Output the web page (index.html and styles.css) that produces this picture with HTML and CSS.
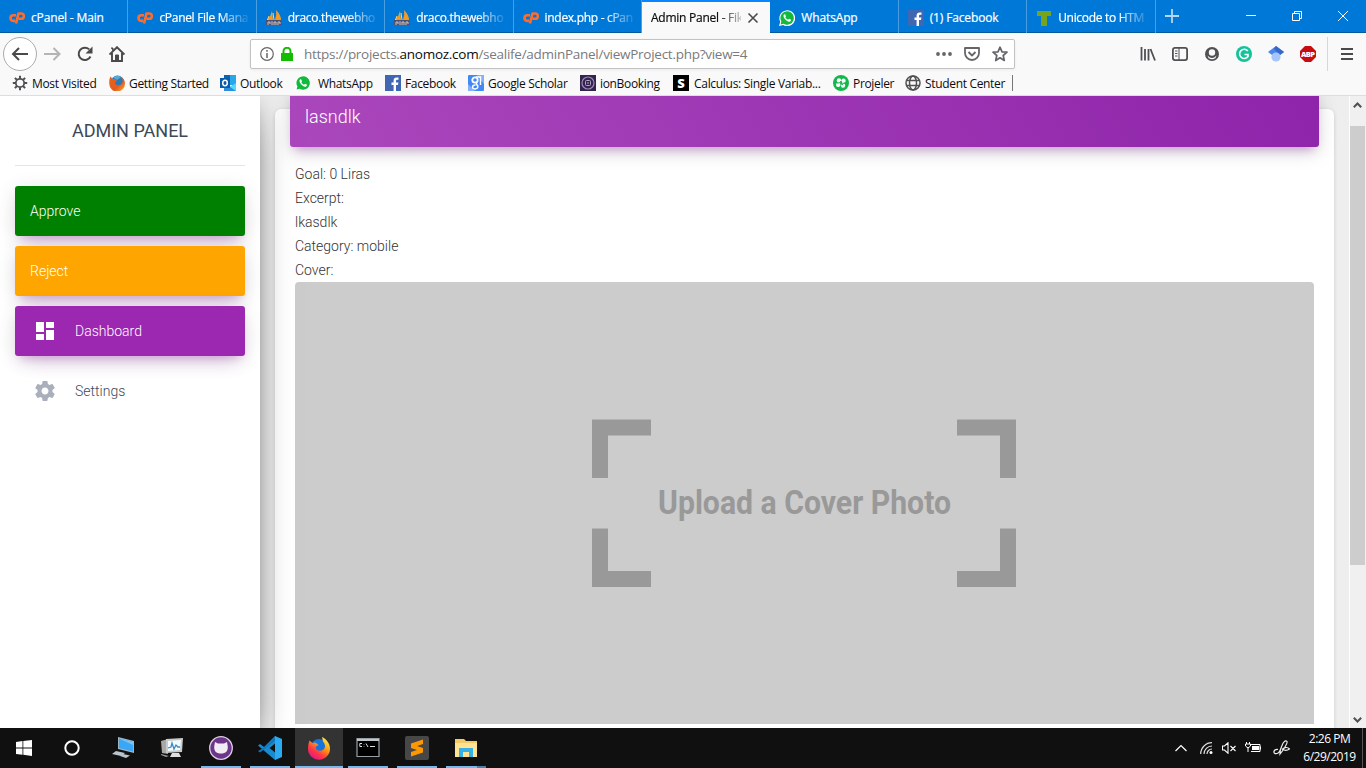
FILE: index.html
```html
<!DOCTYPE html>
<html lang="en">
<head>
<meta charset="utf-8">
<title>Admin Panel</title>
<link rel="stylesheet" href="styles.css">
</head>
<body>
<svg class="defs" width="0" height="0">
  <symbol id="cpanel" viewBox="0 0 16 12"><g fill="none" stroke="#ff6c2c" stroke-width="2.600" stroke-linejoin="round"><path d="M7 3.300H4.300a2.800 2.800 0 0 0 0 5.600H6.200"/><path d="M7 11.500 9.500 1.500h2.700a2.600 2.600 0 0 1 0 5.300H9.600"/></g></symbol>
  <symbol id="boat" viewBox="0 0 16 16"><path d="M6 1 7 10H1Q5 6 6 1M10 0q5 5 5 10H9q2-5 1-10" fill="#f69b22"/><path d="M7 3l1 7M3 6l-2 5" stroke="#ffd27a"/><path d="M0 10h15l1 5H0z" fill="#45517c"/><path d="M2 15v-3h2v2M6 15v-4m2 4v-3h2v3m2 0v-3h2v2" stroke="#d9c6b0" fill="none"/></symbol>
  <symbol id="whatsapp" viewBox="0 0 16 16"><path d="M0 16l1.200-4.200A7.900 7.900 0 1 1 4.200 15z" fill="#fff"/><path d="M1.500 14.500 2.400 11.500A6.700 6.700 0 1 1 4.600 13.700z" fill="#12b93c"/><path d="M5.300 4.200c-1.300.8-1 2.500.2 4.300 1.700 2.500 4 3.700 5.500 3 1.300-.7 1.100-1.800.7-2L10 8.700l-.9 1.100C7.900 9.300 6.900 8.400 6.300 7.300l.7-.9-.7-1.900z" fill="#fff"/></symbol>
  <symbol id="facebook" viewBox="0 0 16 16"><path d="M0 0h16v16H0z" fill="#4267b2"/><path d="M8.600 16V10H6.500V7.600h2.100v-2C8.600 3.500 9.800 2.400 11.700 2.400h1.800v2.400h-1.200C11.400 4.800 11 5.200 11 6v1.600h2.400L13 10h-2v6z" fill="#fff"/></symbol>
  <symbol id="firefox" viewBox="0 0 24 24"><defs><linearGradient id="fx" x1=".9" y1=".05" x2=".25" y2="1"><stop offset="0" stop-color="#fff44f"/><stop offset=".4" stop-color="#ff980e"/><stop offset=".7" stop-color="#ff3647"/><stop offset="1" stop-color="#e31587"/></linearGradient></defs><circle cx="12" cy="11" r="8" fill="#1674dc"/><path d="M2.500 4.500 5.500 7l3-.5 3 2.500-3 2c.5 4 5 5 8 2.500 3-3 1-6-.5-8L15 1c4 2 8 6 8 11.500A11 11 0 0 1 1 13c0-3 .5-6 1.500-8.500z" fill="url(#fx)"/></symbol>
  <symbol id="firefox-old" viewBox="0 0 16 16"><defs><linearGradient id="fo" x1="0" y1="0" x2="1" y2="1"><stop offset="0" stop-color="#e8641b"/><stop offset=".6" stop-color="#e55b1c"/><stop offset="1" stop-color="#fcb23c"/></linearGradient></defs><circle cx="8.500" cy="7" r="6.500" fill="#2a79b8"/><path d="M4 2.500Q8-.5 12 2l-4 3z" fill="#5ba8d4"/><path d="M1.500 1.500 3.500 4l2.500.2L8 6 6 7.200c0 3 3.500 3.500 5.500 2.500 2.500-1.500 2.500-4.500 1.500-7.200 2 1.500 3 3.500 3 6A7.800 7.800 0 0 1 .3 9C0 6 .5 3 1.500 1.500z" fill="url(#fo)"/></symbol>
</svg>

<header class="tabs">
  <div class="tab"><svg class="ic cp"><use href="#cpanel"/></svg><span>cPanel - Main</span></div>
  <div class="tab"><svg class="ic cp"><use href="#cpanel"/></svg><span class="fade">cPanel File Mana</span></div>
  <div class="tab"><svg class="ic"><use href="#boat"/></svg><span class="fade">draco.thewebho</span></div>
  <div class="tab"><svg class="ic"><use href="#boat"/></svg><span class="fade">draco.thewebho</span></div>
  <div class="tab"><svg class="ic cp"><use href="#cpanel"/></svg><span class="fade">index.php - cPan</span></div>
  <div class="tab active"><span class="fade">Admin Panel - Fik</span><svg class="close" viewBox="0 0 12 12"><path d="M1.500 1.500l9 9m0-9l-9 9" stroke="#4a4a4a" stroke-width="1.600"/></svg></div>
  <div class="tab"><svg class="ic"><use href="#whatsapp"/></svg><span>WhatsApp</span></div>
  <div class="tab"><svg class="ic"><use href="#facebook"/></svg><span>(1) Facebook</span></div>
  <div class="tab"><svg class="ic" viewBox="0 0 16 16"><path d="M1 1h14v5h-4v10H5V6H1z" fill="#76a51c"/></svg><span class="fade">Unicode to HTM</span></div>
  <svg class="plus" viewBox="0 0 14 14"><path d="M7 0v14M0 7h14" stroke="#b5d6f4" stroke-width="1.800"/></svg>
  <div class="wincontrols">
    <svg viewBox="0 0 10 10"><path d="M0 4.500h10" stroke="#fff"/></svg>
    <svg viewBox="0 0 10 10"><path d="M.5 2.500h7v7h-7zM2.500 2.500v-2h7v7h-2" stroke="#fff" fill="none"/></svg>
    <svg viewBox="0 0 10 10"><path d="M0 0l10 10M10 0L0 10" stroke="#fff"/></svg>
  </div>
</header>

<nav class="toolbar">
  <div class="navbtns">
    <div class="back"><svg width="18" height="16" viewBox="0 0 18 16"><path d="M17 8H2.500M8 2L2 8l6 6" fill="none" stroke="#4a4a4b" stroke-width="2"/></svg></div>
    <svg width="17" height="16" viewBox="0 0 17 16"><path d="M0 8h15M9.500 2l6 6-6 6" fill="none" stroke="#b4b4b5" stroke-width="2"/></svg>
    <svg width="16" height="16" viewBox="0 0 16 16"><path d="M13.500 10.500A6.200 6.200 0 1 1 12.200 3.400" fill="none" stroke="#4a4a4b" stroke-width="2"/><path d="M15.500.5v7h-7z" fill="#4a4a4b"/></svg>
    <svg width="16" height="16" viewBox="0 0 16 16"><path d="M0.500 8.500L8 1.200l7.500 7.300M3 7v8h10V7" fill="none" stroke="#4a4a4b" stroke-width="1.900"/><path d="M6.500 15V9h3v6M2 2h2v3" fill="#4a4a4b" stroke="#4a4a4b"/></svg>
  </div>
  <div class="urlbar">
    <svg width="14" height="14" viewBox="0 0 14 14"><circle cx="7" cy="7" r="6.300" fill="none" stroke="#666" stroke-width="1.200"/><path d="M7 3v1.700M7 6v5" stroke="#666" stroke-width="1.500"/></svg>
    <svg class="lock" width="12" height="14" viewBox="0 0 12 14"><path d="M0 6h12v8H0z" fill="#12bc00"/><path d="M2.500 7V4.200a3.500 3.500 0 0 1 7 0V7" fill="none" stroke="#12bc00" stroke-width="2"/></svg>
    <span class="url">https://projects.<b>anomoz.com</b>/sealife/adminPanel/viewProject.php?view=4</span>
    <svg width="16" height="14" viewBox="0 0 16 14"><g fill="#66666a"><circle cx="2" cy="7" r="1.900"/><circle cx="8" cy="7" r="1.900"/><circle cx="14" cy="7" r="1.900"/></g></svg>
    <svg width="16" height="14" viewBox="0 0 16 14"><path d="M1 1h14v5a7 7 0 0 1-14 0zM4.500 5L8 8.500 11.500 5" fill="none" stroke="#66666a" stroke-width="1.800" stroke-linejoin="round"/></svg>
    <svg width="16" height="16" viewBox="0 0 16 16"><path d="M8 1.200l2 4.600 5 .4-3.800 3.300 1.100 5L8 11.800l-4.300 2.700 1.100-5L1 6.200l5-.4z" fill="none" stroke="#66666a" stroke-width="1.700" stroke-linejoin="round"/></svg>
  </div>
  <div class="ext">
    <svg viewBox="0 0 16 16"><path d="M1.500 1v13.500M5 3v11.500M8.500 3v11.500M10.500 3l4.500 11.500" stroke="#505053" stroke-width="1.800" fill="none"/></svg>
    <svg viewBox="0 0 16 16"><rect x=".9" y="1.900" width="14.200" height="12.200" rx="2" fill="none" stroke="#505053" stroke-width="1.800"/><path d="M7 2v12M3 5h2.500M3 7.500h2.500M3 10h2.500" stroke="#505053"/></svg>
    <svg viewBox="0 0 16 16"><circle cx="8" cy="8" r="7" fill="#505053"/><circle cx="8" cy="6.500" r="3.200" fill="#f9f9fa"/><path d="M3.500 9.500q4.500 5 9 0l-1 2.500q-3.500 2.500-7 0z" fill="#f9f9fa"/></svg>
    <svg viewBox="0 0 16 16"><circle cx="8" cy="8" r="8" fill="#15c39a"/><path d="M11.800 5A4.600 4.600 0 1 0 12 10.500V8.500H8.500" fill="none" stroke="#fff" stroke-width="1.600"/></svg>
    <svg viewBox="0 0 16 16"><path d="M8 0l8 6-8 6-8-6z" fill="#4b85ed"/><path d="M8 0l8 6-4 3L6 3z" fill="#3569c6"/><circle cx="8" cy="11" r="4.600" fill="#a5c5fb"/></svg>
    <svg viewBox="0 0 16 16"><path d="M5 0h6l5 5v6l-5 5H5l-5-5V5z" fill="#c70d12"/><text x="1" y="10.900" textLength="14" font-size="7.500" class="abp">ABP</text></svg>
    <i class="sep"></i>
    <svg class="menu" viewBox="0 0 12 12"><path d="M0 1h12M0 6h12M0 11h12" stroke="#4a4a4b" stroke-width="1.900"/></svg>
  </div>
</nav>

<div class="bookmarks">
  <div><svg class="ic" viewBox="0 0 16 16"><circle cx="8" cy="8" r="4.200" fill="none" stroke="#505053" stroke-width="1.800"/><path d="M8 .8v3M8 12.200v3M.8 8h3m8.400 0h3M2.900 2.900L5 5m6 6l2.100 2.100M2.900 13.100L5 11m6-6l2.100-2.100" stroke="#505053" stroke-width="2"/></svg><span>Most Visited</span></div>
  <div><svg class="ic"><use href="#firefox-old"/></svg><span>Getting Started</span></div>
  <div><svg class="ic" viewBox="0 0 16 16"><path d="M4 0h12v10H4z" fill="#28a8ea"/><path d="M4 0h6v6H4z" fill="#0f64b0"/><path d="M4 8l6 4 6-4v8H4z" fill="#2b8fe0"/><path d="M10 12l6-4v8z" fill="#50d9ff"/><rect y="3" width="10" height="10" fill="#0a5baa"/><ellipse cx="5" cy="8" rx="2.300" ry="2.700" fill="none" stroke="#fff" stroke-width="1.500"/></svg><span>Outlook</span></div>
  <div class="wa"><svg class="ic"><use href="#whatsapp"/></svg><span>WhatsApp</span></div>
  <div><svg class="ic"><use href="#facebook"/></svg><span>Facebook</span></div>
  <div><svg class="ic" viewBox="0 0 16 16"><rect width="16" height="16" rx="1" fill="#4389f5"/><path d="M0 9l7 7H0zM9 0h7v9z" fill="#83b0fa"/><circle cx="7" cy="5" r="2.700" fill="none" stroke="#fff" stroke-width="1.800"/><path d="M8 2h4.500v8M8.500 7v2.500c2 1 2 4-1 4.500-4 0-4-4 0-4" fill="none" stroke="#fff" stroke-width="1.500"/></svg><span>Google Scholar</span></div>
  <div><svg class="ic" viewBox="0 0 16 16"><path d="M0 0h16v16H0z" fill="#33234f"/><circle cx="8" cy="8" r="6" fill="none" stroke="#9b8bb1" stroke-width="1.200"/><rect x="5.500" y="5.500" width="5" height="5" rx="1" fill="none" stroke="#b4a7c4"/><path d="M7 8h2" stroke="#b4a7c4"/></svg><span>ionBooking</span></div>
  <div class="calc"><svg class="ic" viewBox="0 0 16 16"><path d="M0 0h16v16H0z"/><text x="8" y="12.500" text-anchor="middle" font-size="13" class="abp">S</text></svg><span>Calculus: Single Variab...</span></div>
  <div><svg class="ic" viewBox="0 0 16 16"><circle cx="8" cy="8" r="8" fill="#12b84c"/><g fill="#fff"><circle cx="6" cy="5.500" r="2.200"/><circle cx="10.500" cy="5.800" r="2.200"/><circle cx="5.200" cy="9.800" r="2.200"/><circle cx="10" cy="10.500" r="2.200"/></g><path d="M3.500 8h3l1.500-2 1 4 1.500-2h2" stroke="#12b84c" fill="none"/></svg><span>Projeler</span></div>
  <div class="last"><svg class="ic" viewBox="0 0 16 16"><g fill="none" stroke="#505053" stroke-width="1.500"><circle cx="8" cy="8" r="7"/><ellipse cx="8" cy="8" rx="3.500" ry="7"/><path d="M1.500 5.500h13M1.500 10.500h13"/></g></svg><span>Student Center</span></div>
</div>

<div class="page">
  <aside class="sidebar">
    <h1>ADMIN PANEL</h1>
    <a class="item green">Approve</a>
    <a class="item orange">Reject</a>
    <a class="item purple"><svg viewBox="0 0 24 24"><path fill="#fff" d="M3 13h8V3H3v10zm0 8h8v-6H3v6zm10 0h8V11h-8v10zm0-18v6h8V3h-8z"/></svg>Dashboard</a>
    <a class="item plain"><svg viewBox="0 0 24 24"><path fill="#a9afbb" d="M19.430 12.980c.04-.32.070-.64.070-.98s-.03-.66-.07-.98l2.110-1.650c.19-.15.240-.42.120-.64l-2-3.460c-.12-.22-.39-.3-.61-.22l-2.490 1c-.52-.4-1.080-.73-1.690-.98l-.38-2.650C14.460 2.180 14.250 2 14 2h-4c-.25 0-.46.180-.49.420l-.38 2.650c-.61.250-1.170.590-1.690.98l-2.490-1c-.23-.09-.49 0-.61.220l-2 3.460c-.13.220-.07.490.12.640l2.110 1.650c-.04.320-.07.650-.07.980s.030.660.070.980l-2.110 1.650c-.19.150-.24.420-.12.640l2 3.460c.12.220.39.300.61.220l2.490-1c.52.400 1.080.730 1.690.980l.38 2.650c.03.240.24.420.49.420h4c.25 0 .46-.18.490-.42l.38-2.650c.61-.25 1.170-.59 1.690-.98l2.490 1c.23.090.49 0 .61-.22l2-3.460c.12-.22.070-.49-.12-.64l-2.110-1.650zM12 15.500c-1.930 0-3.500-1.570-3.500-3.500s1.570-3.500 3.500-3.500 3.500 1.570 3.500 3.500-1.570 3.500-3.500 3.500z"/></svg>Settings</a>
  </aside>
  <main class="content">
    <section class="card">
      <h2>lasndlk</h2>
      <div class="body">
        <p>Goal: 0 Liras</p><p>Excerpt:</p><p>lkasdlk</p><p>Category: mobile</p><p>Cover:</p>
        <svg class="cover" viewBox="0 0 1019 442"><g fill="none" stroke="#999" stroke-width="16"><path d="M305 196v-50.500h51M662 145.500h51V196M305 246.500V297h51M662 297h51v-50.500"/></g><text x="363" y="232" textLength="293" lengthAdjust="spacingAndGlyphs">Upload a Cover Photo</text></svg>
      </div>
    </section>
  </main>
  <div class="scroll">
    <svg viewBox="0 0 9 6"><path d="M.8 5.200L4.500 1.500l3.700 3.700" stroke="#505050" stroke-width="2" fill="none"/></svg>
    <i class="thumb"></i>
    <svg viewBox="0 0 9 6"><path d="M.8.8l3.700 3.700L8.200.8" stroke="#505050" stroke-width="2" fill="none"/></svg>
  </div>
</div>

<footer class="taskbar">
  <div class="task w48"><svg width="16" height="16" viewBox="0 0 16 16"><path d="M0 2l6.500-.9v6.400H0zM7.300 1L16 0v7.500H7.300zM0 8.400h6.500v6.400L0 14zM7.300 8.400H16V16l-8.700-1.200z" fill="#fff"/></svg></div>
  <div class="task w48"><svg width="16" height="16" viewBox="0 0 16 16"><circle cx="8" cy="8" r="6.700" fill="none" stroke="#fff" stroke-width="2"/></svg></div>
  <div class="task first"><svg viewBox="0 0 24 24"><path d="M7 1l16 4v12L7 13z" fill="#9eb6c4"/><path d="M8 2.500l14 3.400v9.600L8 12z" fill="#3aa6f5"/><path d="M8 2.500l14 3.400v3z" fill="#74c5ff"/><path d="M5 15l9 2-4 3-9-2zM12 18l7 1.500-4 2.500-6-2z" fill="#b8c5cd"/></svg></div>
  <div class="task"><svg viewBox="0 0 24 24"><path d="M1 5l7-2v15l-6-1z" fill="#a8a9a5"/><path d="M6 3l17-1-1 14-16 1z" fill="#c6cccb"/><path d="M8 5l13-1-1 10-12 1z" fill="#f5fafc"/><path d="M8 12l3-1 1-4 2 6 2-4 2 2h2" fill="none" stroke="#368bc8" stroke-width="1.300"/><path d="M12 17h7l2 4H10z" fill="#dedfdb"/><path d="M1 18l8 2-3 1-5-2z" fill="#999"/></svg></div>
  <div class="task open"><svg viewBox="0 0 24 24"><circle cx="12" cy="12" r="11.300" fill="#6d368c" stroke="#ddd0e1" stroke-width="1.300"/><path d="M6 6l3 1.500h6L18 6l.7 4c.7 5-2 7.500-6.700 7.500S4.600 15 5.300 10z" fill="#f2edf4"/></svg></div>
  <div class="task open"><svg viewBox="0 0 24 24"><path d="M17 0L6 11 2 8 0 9.500 17 24z" fill="#168bd2"/><path d="M0 15l2 1.500L18 4V0L7 11z" fill="#1276ba"/><path d="M17 0l7 3v18l-7 3z" fill="#2aaaf1"/><path d="M17 7.500v9L11.500 12z" fill="#101010"/></svg></div>
  <div class="task open current"><svg><use href="#firefox"/></svg></div>
  <div class="task open"><svg viewBox="0 0 24 24"><path d="M1 2.500h22v18H1z" fill="#000" stroke="#9aa1a5" stroke-width="1.200"/><path d="M1 3h22v2H1z" fill="#bfc7cc"/><path d="M6 7.500H3.800v3H6m2-2v.5m0 1.500v.5M10 7.500l2 3.500m2-.5h5" fill="none" stroke="#ddd"/></svg></div>
  <div class="task open"><svg viewBox="0 0 24 24"><rect width="24" height="24" rx="2" fill="#474747"/><path d="M6 7.500l12-4V8l-6 2 6 2v4.500l-12 4V16l6-2-6-2z" fill="#ff9800"/></svg></div>
  <div class="task open multi"><svg viewBox="0 0 24 24"><path d="M1 3h9l2 2h11v15H1z" fill="#f5ca66"/><path d="M1 7h22v14H1z" fill="#ffe391"/><path d="M5 12h14v9h-4v-5H9v5H5z" fill="#36b1e5"/></svg></div>
  <div class="tray">
    <svg width="12" height="8" viewBox="0 0 12 8"><path d="M.5 7L6 1.500 11.500 7" stroke="#fff" stroke-width="1.200" fill="none"/></svg>
    <svg width="13" height="12" viewBox="0 0 13 12"><g fill="none" stroke="#ddd" stroke-width="1.200"><path d="M.7 12A11.300 11.300 0 0 1 12 .7M4 12a8 8 0 0 1 8-8M7 12a5 5 0 0 1 5-5"/></g><circle cx="11" cy="10.500" r="1.500" fill="#fff"/></svg>
    <svg width="14" height="12" viewBox="0 0 14 12"><path d="M.5 4h2L6 .8v10.400L2.500 8h-2zM8.500 4l5 5m0-5l-5 5" fill="none" stroke="#fff" stroke-width="1.100"/></svg>
    <svg width="17" height="12" viewBox="0 0 17 12"><path d="M5 2.500h10v7H6M15.500 4.500v3M1.500 0v2m3-2v2M.5 2h5v2L3 6 .5 4zM3 5v5" fill="none" stroke="#fff"/><path d="M7 4h7v4H7z" fill="#fff"/></svg>
    <svg width="17" height="16" viewBox="0 0 17 16"><path d="M5 9.500c-5-.5-5.500 5-1 4 3-.7 3-3 5-8 1-3 3.500-6 5-4 1 1.500-2 5-3.500 8l-3.500 4.500.5-5M9 9.500c3-3 6-2 7.500-.5q-3 2-5.500 1" fill="none" stroke="#eee" stroke-width="1.200"/></svg>
  </div>
  <div class="clock"><span>2:26 PM</span><span>6/29/2019</span></div>
  <i class="edge"></i>
</footer>
</body>
</html>
```
FILE: styles.css
```css
* { box-sizing: border-box; }
body { margin: 0; width: 1366px; height: 768px; overflow: hidden; display: flex; flex-direction: column; background: #f9f9fa; font: 12px "Open Sans", "Noto Sans", sans-serif; color: #0c0c0d; }
svg { display: block; flex: none; }
.defs { position: absolute; }
.ic { width: 16px; height: 16px; }

.tabs { height: 33px; flex: none; display: flex; background: #0078d7; color: #fff; border-bottom: 1px solid #005a9e; }
.tab { flex: 0 0 128.4px; min-width: 0; height: 33px; display: flex; align-items: center; gap: 6px; padding: 2px 4px 0 9px; border-right: 1px solid #4a9fe3; letter-spacing: -.15px; white-space: nowrap; -webkit-text-stroke: .2px; }
.tab span { flex: 1; min-width: 0; }
.tab .fade { letter-spacing: -.3px; mask-image: linear-gradient(90deg, #000 60px, transparent 92px); }
.tab.active { background: #f9f9fa; color: #0c0c0d; border: 0; border-top: 2px solid #0a84ff; padding: 0 11px 0 9px; }
.tab.active .fade { letter-spacing: -.25px; mask-image: linear-gradient(90deg, #000 68px, transparent 96px); }
.tab .cp { height: 12px; }
.close { width: 12px; height: 12px; }
.plus { width: 14px; height: 14px; margin: 9px 0 0 9px; }
.wincontrols { margin-left: auto; display: flex; gap: 36px; padding: 11px 18px 0 0; }
.wincontrols svg { width: 10px; height: 10px; }

.toolbar { height: 39px; flex: none; display: flex; align-items: center; padding: 2px 13px 0 3px; }
.navbtns { display: flex; align-items: center; width: 247px; gap: 16px; }
.back { width: 34px; height: 34px; border: 1px solid #ababab; border-radius: 50%; background: #fff; display: grid; place-items: center; margin-right: -9px; }
.urlbar { width: 765px; height: 30px; display: flex; align-items: center; gap: 12px; background: #fff; border: 1px solid #c2c2c4; border-radius: 2px; padding: 0 6px 0 9px; box-shadow: 0 1px 3px rgba(0,0,0,.06); }
.lock { margin-left: -5px; }
.url { flex: 1; margin-left: -1px; padding-top: 1px; font-size: 13.500px; letter-spacing: -.27px; color: #7a7a7d; white-space: nowrap; }
.url b { color: #0c0c0d; font-weight: 400; }
.ext { margin-left: auto; display: flex; align-items: center; gap: 16px; }
.ext svg { width: 16px; height: 16px; }
.abp { font-family: "Open Sans", sans-serif; font-weight: 800; letter-spacing: 0; fill: #fff; }
.sep { width: 1px; height: 34px; background: #d7d7d8; margin: 0 -3px 0 -5px; }
.ext .menu { width: 12px; height: 12px; }

.bookmarks { height: 24px; flex: none; display: grid; grid-template-columns: 97px 111px 75px 90px 83px 112px 93px 160px 72px 108px; padding: 0 0 1px 12px; border-bottom: 1px solid #dededf; }
.bookmarks div { display: flex; align-items: center; gap: 4px; white-space: nowrap; letter-spacing: -.33px; }
.bookmarks .wa { gap: 7px; }
.bookmarks .calc { gap: 5px; letter-spacing: -.3px; }
.bookmarks .last { background: linear-gradient(#777, #777) right 3px / 1px 16px no-repeat; }

.page { height: 632px; flex: none; display: flex; background: #eee; overflow: hidden; font-family: Roboto, sans-serif; }
.sidebar { position: relative; z-index: 2; width: 260px; flex: none; padding: 0 15px; background: #fff; box-shadow: 0 16px 38px -12px rgba(0,0,0,.56), 0 4px 25px rgba(0,0,0,.12), 0 8px 10px -5px rgba(0,0,0,.2); }
h1 { margin: 0 0 20px; height: 70px; border-bottom: 1px solid #e5e5e5; font-size: 18px; line-height: 70px; font-weight: 400; text-align: center; color: #3c4858; }
.item { display: flex; align-items: center; height: 50px; margin-bottom: 10px; padding: 0 15px; border-radius: 3px; font-size: 14px; font-weight: 300; color: #fff; box-shadow: 0 12px 20px -10px rgba(156,39,176,.28), 0 4px 20px rgba(0,0,0,.12), 0 7px 8px -5px rgba(156,39,176,.2); }
.item svg { width: 24px; height: 24px; margin: 0 18px 0 3px; }
.green { background: #008000; }
.orange { background: #ffa500; }
.purple { background: #9c27b0; }
.plain { color: #3c4858; box-shadow: none; }
.content { flex: 1; padding: 13px 15px 0; }
.card { height: 700px; padding: 0 15px; background: #fff; border-radius: 6px; box-shadow: 0 1px 4px rgba(0,0,0,.14); }
h2 { position: relative; top: -20px; margin: 0 0 -20px; height: 58px; padding: 15px; border-radius: 3px; font-size: 18px; line-height: 25px; font-weight: 300; color: #fff; background: linear-gradient(60deg, #ab47bc, #8e24aa); box-shadow: 0 5px 20px rgba(0,0,0,.14), 0 7px 10px -5px rgba(156,39,176,.4); }
.body { padding: 15px 5px 0; color: #333; }
.body p { margin: 0; height: 24px; line-height: 24px; font-size: 14px; font-weight: 300; }
.cover { width: 1019px; height: 442px; background: #ccc; border-radius: 4px 4px 0 0; }
.cover text { font: 700 33.500px Roboto, sans-serif; fill: #999; }
.scroll { width: 17px; flex: none; display: flex; flex-direction: column; align-items: flex-start; padding: 6px 0 5px; background: #f0f0f0; border-left: 1px solid #fff; }
.scroll svg { width: 9px; height: 6px; margin-left: 3px; }
.thumb { width: 15px; height: 439px; margin: 18px 0 auto; background: #cdcdcd; }

.taskbar { height: 40px; flex: none; display: flex; background: #101010; color: #fff; }
.task { width: 49px; height: 40px; display: grid; place-items: center; }
.task svg { width: 24px; height: 24px; }
.task.w48 { width: 48px; }
.task.w48 svg { width: 16px; height: 16px; }
.first { margin-left: 2px; }
.open { background: linear-gradient(#76b9ed, #76b9ed) 5px 100% / 40px 2px no-repeat; }
.current { width: 48px; margin-left: 1px; background: linear-gradient(#76b9ed, #76b9ed) 0 100% / 100% 2px no-repeat #333; }
.multi { background: linear-gradient(90deg, #76b9ed 31px, #4d7fa8 31px) 5px 100% / 40px 2px no-repeat; }
.tray { margin-left: auto; display: flex; align-items: center; gap: 9px; }
.tray svg:first-child { margin-right: 4px; }
.tray svg:last-child { margin-left: 2px; }
.clock { width: 68px; margin-left: 4px; display: flex; flex-direction: column; align-items: center; padding: 2px 0 0 3px; line-height: 18px; letter-spacing: -.5px; }
.edge { width: 4px; border-left: 1px solid #555; }
```
